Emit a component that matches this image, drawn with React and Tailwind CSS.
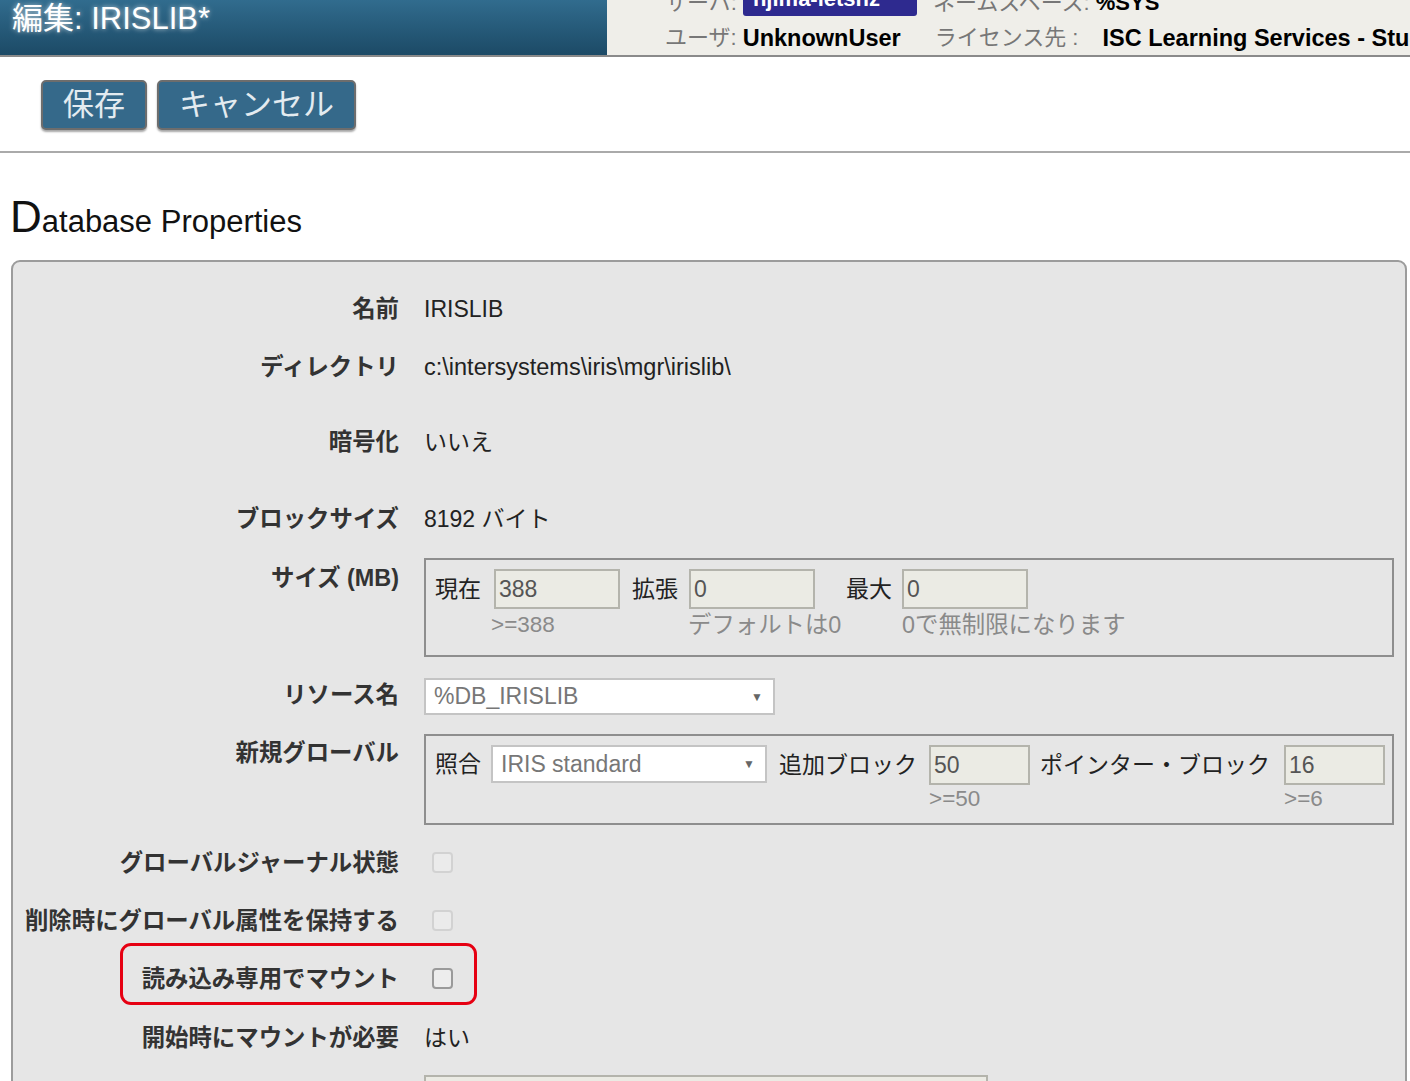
import React from 'react';

const font = "font-['Liberation_Sans','Noto_Sans_CJK_JP',sans-serif]";

const Label = ({ children, className = '' }) => (
    <div className={`w-[386px] shrink-0 text-right font-bold text-[23.4px] leading-[30px] text-[#333] whitespace-nowrap ${className}`}>
        {children}
    </div>
);

const ReadOnlyInput = ({ value, width }) => (
    <div className={`${width} h-[40px] shrink-0 border-2 border-[#b4b4ac] bg-[#ebebe4] pl-[3px] text-[23px] leading-[36px] text-[#555]`}>
        {value}
    </div>
);

const FakeSelect = ({ value, width, height }) => (
    <div className={`${width} ${height} shrink-0 flex items-center justify-between border-2 border-[#c4c4c4] bg-white pl-[8px] pr-[10px] text-[23px] text-[#777]`}>
        <span>{value}</span>
        <span className="text-[12px] text-[#666]">▼</span>
    </div>
);

const Checkbox = ({ strong }) => (
    <div
        className={`ml-[8px] mt-[4px] w-[21px] h-[21px] rounded-[4px] border-2 ${strong ? 'border-[#9a9a9a] bg-[#ededed]' : 'border-[#d2d2d2] bg-[#ebebeb]'}`}
    />
);

const checkRows = [
    { label: 'グローバルジャーナル状態' },
    { label: '削除時にグローバル属性を保持する' },
    { label: '読み込み専用でマウント', marked: true },
];

export default function App() {
    return (
        <div className={`w-[1410px] h-[1081px] overflow-hidden bg-white ${font}`}>
            {/* Top header */}
            <div className="flex h-[57px] border-b-2 border-[#8a8a8a] overflow-hidden">
                <div className="w-[607px] shrink-0 bg-gradient-to-b from-[#316c8e] to-[#1c4a66] pl-[12px]">
                    <div className="mt-[1px] text-[31px] leading-[36px] text-white [text-shadow:0_0_5px_rgba(255,255,255,0.7)]">
                        編集: IRISLIB*
                    </div>
                </div>
                <div className="flex-1 bg-[#efeee9] pl-[58px] whitespace-nowrap">
                    <div className="-mt-[12px] flex items-end h-[28px] text-[22px] leading-[26px]">
                        <span className="text-[#777]">サーバ:</span>
                        <span className="ml-[6px] h-[28px] w-[174px] rounded-b-[3px] bg-[#2e2a8f] px-[10px] font-bold text-white leading-[22px]">njima-letsnz</span>
                        <span className="ml-[16px] text-[#777]">ネームスペース:</span>
                        <span className="ml-[6px] font-bold text-black">%SYS</span>
                    </div>
                    <div className="mt-[9px] flex items-center h-[26px] text-[22px] leading-[26px]">
                        <span className="text-[#777]">ユーザ:</span>
                        <span className="ml-[6px] text-[23.5px] font-bold text-black">UnknownUser</span>
                        <span className="ml-[34px] text-[#777]">ライセンス先 :</span>
                        <span className="ml-[24px] text-[23.5px] font-bold text-black">ISC Learning Services - Student</span>
                    </div>
                </div>
            </div>

            {/* Button bar */}
            <div className="flex gap-[10px] pl-[41px] pt-[23px] pb-[21px] border-b-2 border-[#aaa]">
                <button className="h-[50px] px-[20px] rounded-[5px] border-2 border-[#6d6d6d] bg-[#35698a] text-[31px] leading-[44px] text-[#e3ebf0] shadow-[0_2px_2px_rgba(0,0,0,0.35)]">
                    保存
                </button>
                <button className="h-[50px] px-[20px] rounded-[5px] border-2 border-[#6d6d6d] bg-[#35698a] text-[31px] leading-[44px] text-[#e3ebf0] shadow-[0_2px_2px_rgba(0,0,0,0.35)]">
                    キャンセル
                </button>
            </div>

            {/* Heading */}
            <div className="mt-[42px] ml-[10px] h-[44px] leading-[44px] text-[#111] whitespace-nowrap">
                <span className="text-[44px]">D</span>
                <span className="text-[31px]">atabase Properties</span>
            </div>

            {/* Properties panel */}
            <div className="mt-[21px] ml-[11px] w-[1396px] h-[900px] rounded-t-[9px] border-2 border-[#9c9c9c] bg-[#e6e6e6] pt-[32px]">
                <div className="flex items-start">
                    <Label>名前</Label>
                    <div className="ml-[25px] text-[23px] leading-[30px] text-[#222]">IRISLIB</div>
                </div>
                <div className="mt-[28px] flex items-start">
                    <Label>ディレクトリ</Label>
                    <div className="ml-[25px] text-[23.5px] leading-[30px] text-[#222]">c:\intersystems\iris\mgr\irislib\</div>
                </div>
                <div className="mt-[45px] flex items-start">
                    <Label>暗号化</Label>
                    <div className="ml-[25px] text-[23px] leading-[30px] text-[#222]">いいえ</div>
                </div>
                <div className="mt-[47px] flex items-start">
                    <Label>ブロックサイズ</Label>
                    <div className="ml-[25px] text-[23px] leading-[30px] text-[#222]">8192 バイト</div>
                </div>

                {/* Size */}
                <div className="mt-[24px] flex items-start">
                    <Label className="mt-[5px]">サイズ (MB)</Label>
                    <div className="ml-[25px] w-[970px] h-[99px] border-2 border-[#8e8e8e] pl-[9px] pt-[9px] flex items-start text-[23px] text-[#222]">
                        <div className="flex items-start gap-[13px]">
                            <span className="leading-[40px]">現在</span>
                            <div className="w-[126px]">
                                <ReadOnlyInput value="388" width="w-[126px]" />
                                <div className="mt-[3px] -ml-[3px] text-[22.5px] leading-[26px] text-[#8a8a8a] whitespace-nowrap">&gt;=388</div>
                            </div>
                        </div>
                        <div className="ml-[12px] flex items-start gap-[11px]">
                            <span className="leading-[40px]">拡張</span>
                            <div className="w-[126px]">
                                <ReadOnlyInput value="0" width="w-[126px]" />
                                <div className="mt-[3px] -ml-[1px] text-[23.4px] leading-[26px] text-[#8a8a8a] whitespace-nowrap">デフォルトは0</div>
                            </div>
                        </div>
                        <div className="ml-[31px] flex items-start gap-[10px]">
                            <span className="leading-[40px]">最大</span>
                            <div className="w-[126px]">
                                <ReadOnlyInput value="0" width="w-[126px]" />
                                <div className="mt-[3px] text-[23.4px] leading-[26px] text-[#8a8a8a] whitespace-nowrap">0で無制限になります</div>
                            </div>
                        </div>
                    </div>
                </div>

                {/* Resource */}
                <div className="mt-[21px] flex items-start">
                    <Label className="mt-[2px]">リソース名</Label>
                    <div className="ml-[25px]">
                        <FakeSelect value="%DB_IRISLIB" width="w-[351px]" height="h-[37px]" />
                    </div>
                </div>

                {/* New global */}
                <div className="mt-[19px] flex items-start">
                    <Label className="mt-[4px]">新規グローバル</Label>
                    <div className="ml-[25px] w-[970px] h-[91px] border-2 border-[#8e8e8e] pl-[9px] pt-[9px] flex items-start text-[23px] text-[#222] whitespace-nowrap">
                        <span className="leading-[38px]">照合</span>
                        <div className="ml-[10px]">
                            <FakeSelect value="IRIS standard" width="w-[276px]" height="h-[38px]" />
                        </div>
                        <span className="ml-[12px] leading-[40px]">追加ブロック</span>
                        <div className="ml-[12px]">
                            <ReadOnlyInput value="50" width="w-[101px]" />
                            <div className="mt-[1px] text-[22.5px] leading-[26px] text-[#8a8a8a]">&gt;=50</div>
                        </div>
                        <span className="ml-[10px] leading-[40px]">ポインター・ブロック</span>
                        <div className="ml-[14px]">
                            <ReadOnlyInput value="16" width="w-[101px]" />
                            <div className="mt-[1px] text-[22.5px] leading-[26px] text-[#8a8a8a]">&gt;=6</div>
                        </div>
                    </div>
                </div>

                {/* Checkbox rows */}
                {checkRows.map((row, i) => (
                    <div key={row.label} className={`relative flex items-start ${i === 0 ? 'mt-[23px]' : 'mt-[28px]'}`}>
                        <Label>{row.label}</Label>
                        <div className="ml-[25px]">
                            <Checkbox strong={row.marked} />
                        </div>
                        {row.marked && (
                            <div className="absolute left-[107px] top-[-21px] w-[357px] h-[62px] rounded-[11px] border-[3px] border-[#e60012] pointer-events-none" />
                        )}
                    </div>
                ))}

                <div className="mt-[29px] flex items-start">
                    <Label>開始時にマウントが必要</Label>
                    <div className="ml-[25px] text-[23px] leading-[30px] text-[#222]">はい</div>
                </div>

                <div className="mt-[22px] flex items-start">
                    <Label />
                    <div className="ml-[25px]">
                        <ReadOnlyInput value="" width="w-[564px]" />
                    </div>
                </div>
            </div>
        </div>
    );
}
